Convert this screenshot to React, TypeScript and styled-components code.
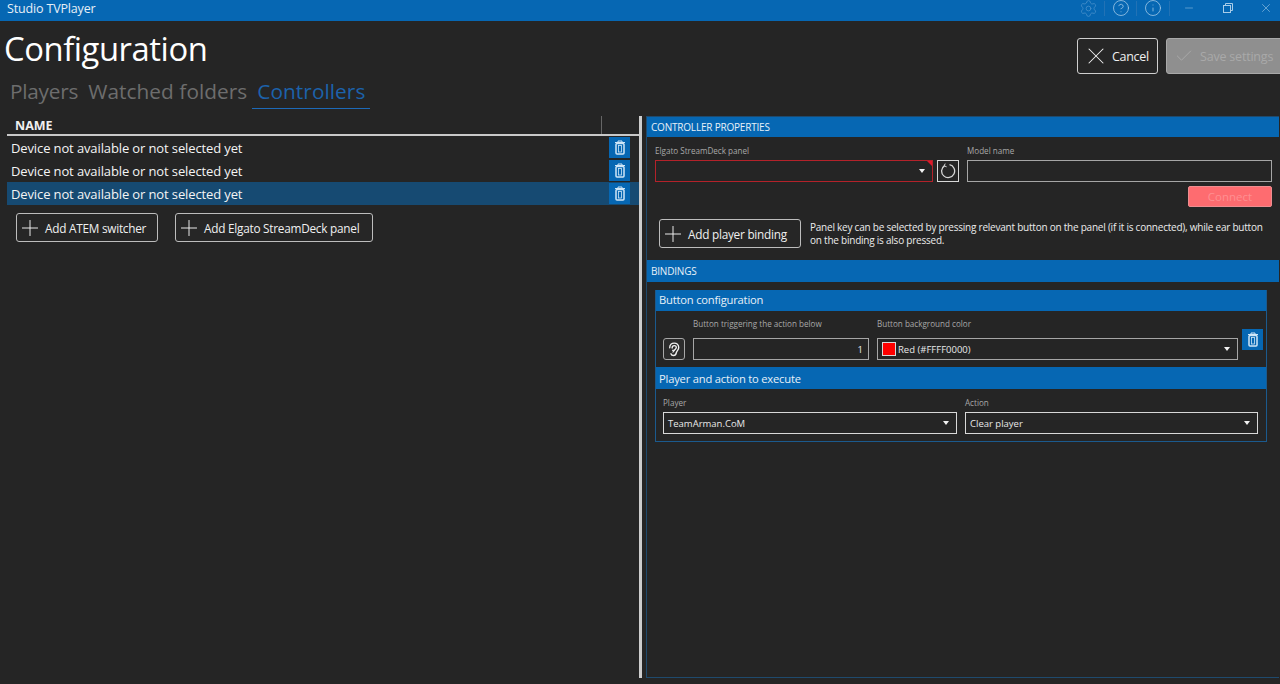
import React from "react";
import styled, { createGlobalStyle } from "styled-components";
import { CircleHelp, Info, Plus, Settings, X, Check, Minus } from "lucide-react";

const BLUE = "#0667b3";

const GlobalStyle = createGlobalStyle`
  * { box-sizing: border-box; }
  html, body { margin: 0; padding: 0; height: 100%; background: #252525; overflow: hidden; }
  body { font-family: "Open Sans", "Noto Sans", "Liberation Sans", sans-serif; color: #f4f4f4; }
`;

const Page = styled.div`
  width: 1280px;
  height: 684px;
  overflow: hidden;
  background: #252525;
`;

const TitleBar = styled.header`
  height: 21px;
  background: ${BLUE};
  display: flex;
  align-items: center;
  padding: 0 0 5px 7px;
`;

const AppName = styled.span`
  font-size: 12.5px;
  letter-spacing: -0.16px;
  color: #e6eff7;
  flex: 1;
`;

const TitleIcons = styled.div`
  display: flex;
  align-items: center;
  margin-right: -4px;
  color: #4a90cb;
`;

const TitleIcon = styled.div<{ $w: number; $line?: boolean; $bright?: boolean }>`
  width: ${(p) => p.$w}px;
  height: 15px;
  display: flex;
  align-items: center;
  justify-content: center;
  color: ${(p) => (p.$bright ? "#a9cde9" : "inherit")};
  border-right: ${(p) => (p.$line ? "1px solid #2272b5" : "none")};
`;

const TopRow = styled.div`
  height: 95px;
  width: 1320px;
  display: flex;
`;

const Heading = styled.div`
  width: 1077px;
  flex: none;
`;

const Title = styled.h1`
  margin: 9px 0 0;
  padding-left: 4px;
  font-size: 32.8px;
  font-weight: 400;
  line-height: 38px;
  letter-spacing: -0.45px;
  color: #fff;
`;

const Tabs = styled.nav`
  display: flex;
  padding-left: 5px;
  margin-top: 9px;
`;

const Tab = styled.div<{ $active?: boolean }>`
  height: 32px;
  padding: 0 5px;
  font-size: 20.8px;
  line-height: 28px;
  letter-spacing: 0.06px;
  color: ${(p) => (p.$active ? "#1c62ab" : "#6d6d6d")};
  border-bottom: 1px solid ${(p) => (p.$active ? "#1d6ab8" : "transparent")};

  &:first-child {
    letter-spacing: -0.24px;
  }
`;

const TopButtons = styled.div`
  display: flex;
  gap: 8px;
  padding-top: 17px;
`;

const CancelButton = styled.button`
  width: 81px;
  height: 36px;
  display: flex;
  align-items: center;
  gap: 2px;
  padding: 0 0 0 4px;
  background: #262626;
  border: 1px solid #cfcfcf;
  border-radius: 3px;
  color: #f0f0f0;
  font: inherit;
  font-size: 12.5px;
  letter-spacing: -0.3px;
`;

const SaveButton = styled(CancelButton)`
  width: 130px;
  background: #8f8f8f;
  border-color: #a9a9a9;
  color: #a9a9a9;
  gap: 6px;
  padding-left: 7px;
  letter-spacing: -0.2px;
`;

const Main = styled.main`
  height: 562px;
  display: flex;
  padding-left: 7px;
`;

const DevicePane = styled.section`
  width: 632px;
  flex: none;
`;

const ColumnHead = styled.div`
  height: 20px;
  border-bottom: 2px solid #c8c8c8;
`;

const NameCell = styled.div`
  width: 595px;
  height: 18px;
  padding: 2px 0 0 8px;
  border-right: 1px solid #666;
  font-size: 12.5px;
  font-weight: 700;
  line-height: 16px;
  color: #f0f0f0;
`;

const DeviceRow = styled.div<{ $selected?: boolean }>`
  height: 23px;
  display: flex;
  align-items: center;
  justify-content: space-between;
  padding: 0 9px 0 4px;
  font-size: 13px;
  letter-spacing: -0.12px;
  color: #f4f4f4;
  background: ${(p) => (p.$selected ? "#164a72" : "transparent")};
`;

const TrashButton = styled.button`
  width: 21px;
  height: 21px;
  flex: none;
  display: flex;
  align-items: center;
  justify-content: center;
  padding: 0;
  border: none;
  background: ${BLUE};
  color: #cfe6f7;
`;

const AddRow = styled.div`
  display: flex;
  gap: 17px;
  padding: 8px 0 0 9px;
`;

const AddButton = styled.button<{ $w: number }>`
  width: ${(p) => p.$w}px;
  height: 29px;
  display: flex;
  align-items: center;
  gap: 2px;
  padding: 0;
  background: #262626;
  border: 1px solid #bdbdbd;
  border-radius: 3px;
  color: #f0f0f0;
  font: inherit;
  font-size: 11.8px;
  letter-spacing: -0.25px;
  white-space: nowrap;
`;

const Splitter = styled.div`
  width: 3px;
  flex: none;
  background: #cdcdcd;
`;

const PropsPane = styled.section`
  width: 633px;
  flex: none;
  margin-left: 4px;
  border: 1px solid #1f4a6d;
  border-right: none;
`;

const SectionHeader = styled.div<{ $h: number; $tall?: boolean }>`
  height: ${(p) => p.$h}px;
  display: flex;
  align-items: center;
  padding-left: ${(p) => (p.$tall ? 3 : 4)}px;
  background: ${BLUE};
  font-size: ${(p) => (p.$tall ? "11.2px" : "10px")};
  letter-spacing: -0.2px;
  color: #e6f0f8;
`;

const ConfigHeader = styled(SectionHeader)`
  padding-bottom: 2px;
`;

const PropsBody = styled.div`
  padding: 7px 7px 12px 8px;
`;

const DeviceGrid = styled.div`
  display: grid;
  grid-template-columns: 278px 22px 305px;
  column-gap: 4px;
  align-items: end;

  & > :last-child {
    margin-left: 4px;
    width: 305px;
  }
`;

const Field = styled.div<{ $gap?: number }>`
  display: flex;
  flex-direction: column;
  gap: ${(p) => p.$gap ?? 2}px;
  min-width: 0;
`;

const FieldLabel = styled.label`
  height: 14px;
  font-size: 8.1px;
  line-height: 14px;
  color: #a8a8a8;
`;

const Combo = styled.div<{ $error?: boolean; $bright?: boolean }>`
  position: relative;
  height: 22px;
  display: flex;
  align-items: center;
  gap: 2px;
  padding: 0 18px 0 4px;
  border: 1px solid ${(p) => (p.$error ? "#b4222a" : p.$bright ? "#d8d8d8" : "#a6a6a6")};
  background: #252525;
  font-size: 9.5px;
  color: #e8e8e8;

  &::after {
    content: "";
    position: absolute;
    right: 7px;
    top: 8px;
    border-left: 3.5px solid transparent;
    border-right: 3.5px solid transparent;
    border-top: 4px solid #f2f2f2;
  }
`;

const ErrorCorner = styled.span`
  position: absolute;
  top: 0;
  right: 0;
  border-top: 5px solid #e0182a;
  border-left: 5px solid transparent;
`;

const TextBox = styled.div<{ $right?: boolean }>`
  height: 22px;
  display: flex;
  align-items: center;
  justify-content: ${(p) => (p.$right ? "flex-end" : "flex-start")};
  padding: 0 5px;
  border: 1px solid #a6a6a6;
  background: #252525;
  font-size: 9.5px;
  color: #e8e8e8;
`;

const RefreshButton = styled.button`
  width: 22px;
  height: 22px;
  display: flex;
  align-items: center;
  justify-content: center;
  padding: 0;
  background: #262626;
  border: 1px solid #d8d8d8;
  color: #d8d8d8;
`;

const ConnectRow = styled.div`
  display: flex;
  justify-content: flex-end;
  margin-top: 4px;
`;

const ConnectButton = styled.button`
  width: 84px;
  height: 21px;
  padding: 0;
  background: #fe6c70;
  border: 1px solid #ee8d90;
  border-radius: 2px;
  color: #ff8f92;
  font: inherit;
  font-size: 11.5px;
`;

const BindingRow = styled.div`
  display: flex;
  align-items: center;
  gap: 9px;
  margin-top: 12px;
  padding-left: 4px;
`;

const Hint = styled.p`
  margin: 0;
  width: 462px;
  font-size: 10px;
  line-height: 13px;
  letter-spacing: -0.23px;
  color: #ececec;
`;

const BindingGroup = styled.div`
  width: 612px;
  margin: 8px 0 0 8px;
  border: 1px solid #1b5a8e;
  border-top: none;
`;

const ConfigRow = styled.div`
  display: grid;
  grid-template-columns: 22px 176px 361px 21px;
  column-gap: 8px;
  padding: 6px 0 7px 7px;
  align-items: end;
`;

const EarButton = styled.button`
  width: 22px;
  height: 22px;
  display: flex;
  align-items: center;
  justify-content: center;
  padding: 0;
  background: #2c2c2c;
  border: 1px solid #a8a8a8;
  border-radius: 3px;
  color: #f0f0f0;
`;

const Swatch = styled.span`
  width: 14px;
  height: 14px;
  flex: none;
  background: #ff0000;
  border: 1px solid #d9d9d9;
`;

const RowTrash = styled(TrashButton)`
  align-self: start;
  margin: 12px 0 0 -4px;
`;

const PlayerRow = styled.div`
  display: grid;
  grid-template-columns: 294px 293px;
  column-gap: 8px;
  padding: 7px 0 7px 7px;
`;

const TrashIcon = () => (
  <svg width="12" height="15" viewBox="0 0 12 15" fill="none" stroke="currentColor">
    <path d="M1 2.5h10M4 2.5V1h4v1.5" strokeWidth="1" />
    <rect x="2" y="3.5" width="8" height="10.5" rx="1" strokeWidth="1.5" />
    <rect x="4.5" y="5.5" width="3" height="6.5" strokeWidth="0.8" />
  </svg>
);

const RestoreIcon = () => (
  <svg width="10" height="10" viewBox="0 0 10 10" fill="none" stroke="currentColor" strokeWidth="1">
    <rect x="0.5" y="2.5" width="7" height="7" />
    <path d="M2.5 2.5V0.5h7v7H7.5" />
  </svg>
);

const RefreshIcon = () => (
  <svg width="16" height="16" viewBox="0 0 16 16" fill="none" stroke="currentColor" strokeWidth="1.3">
    <path d="M4.6 2.6A6.5 6.5 0 1 0 9.5 1.7" />
    <path d="M5.2 0.6 4.2 2.8 6.6 3.8" strokeWidth="1" />
  </svg>
);

const EarIcon = () => (
  <svg width="12" height="15" viewBox="0 0 14 17" fill="none" stroke="currentColor" strokeWidth="1.6" strokeLinecap="round">
    <path d="M2 6.5C2 3 4.3 1 7.2 1c3 0 5.3 2.2 5.3 5.3 0 2.8-2.3 3.7-2.8 6-.4 2-1.6 3.2-3.3 3.2-1.5 0-2.6-.8-3-2" />
    <path d="M4.8 6.8c0-1.6 1-2.8 2.5-2.8 1.4 0 2.4 1 2.4 2.3 0 1.6-1.9 2-2.4 3.4" />
    <path d="M5.2 9.5c.7-.6 1.5-.2 1.5.7 0 .7-.6 1.2-1.2 1.2" strokeWidth="1.2" />
  </svg>
);

const devices = [false, false, true];

export default function App() {
  return (
    <Page>
      <GlobalStyle />
      <TitleBar>
        <AppName>Studio TVPlayer</AppName>
        <TitleIcons>
          <TitleIcon $w={33} $line>
            <Settings size={19} strokeWidth={1} />
          </TitleIcon>
          <TitleIcon $w={32} $line $bright>
            <CircleHelp size={18} strokeWidth={1} />
          </TitleIcon>
          <TitleIcon $w={33} $line $bright>
            <Info size={18} strokeWidth={1} />
          </TitleIcon>
          <TitleIcon $w={38} $bright>
            <Minus size={12} strokeWidth={1} />
          </TitleIcon>
          <TitleIcon $w={40} $bright>
            <RestoreIcon />
          </TitleIcon>
          <TitleIcon $w={36} $bright>
            <X size={14} strokeWidth={1} />
          </TitleIcon>
        </TitleIcons>
      </TitleBar>

      <TopRow>
        <Heading>
          <Title>Configuration</Title>
          <Tabs>
            <Tab>Players</Tab>
            <Tab>Watched folders</Tab>
            <Tab $active>Controllers</Tab>
          </Tabs>
        </Heading>
        <TopButtons>
          <CancelButton>
            <X size={28} strokeWidth={0.9} />
            Cancel
          </CancelButton>
          <SaveButton>
            <Check size={20} strokeWidth={1.2} />
            Save settings
          </SaveButton>
        </TopButtons>
      </TopRow>

      <Main>
        <DevicePane>
          <ColumnHead>
            <NameCell>NAME</NameCell>
          </ColumnHead>
          {devices.map((selected, i) => (
            <DeviceRow key={i} $selected={selected}>
              Device not available or not selected yet
              <TrashButton>
                <TrashIcon />
              </TrashButton>
            </DeviceRow>
          ))}
          <AddRow>
            <AddButton $w={142}>
              <Plus size={26} strokeWidth={0.9} />
              Add ATEM switcher
            </AddButton>
            <AddButton $w={198}>
              <Plus size={26} strokeWidth={0.9} />
              Add Elgato StreamDeck panel
            </AddButton>
          </AddRow>
        </DevicePane>

        <Splitter />

        <PropsPane>
          <SectionHeader $h={20}>CONTROLLER PROPERTIES</SectionHeader>
          <PropsBody>
            <DeviceGrid>
              <Field>
                <FieldLabel>Elgato StreamDeck panel</FieldLabel>
                <Combo $error>
                  <ErrorCorner />
                </Combo>
              </Field>
              <RefreshButton>
                <RefreshIcon />
              </RefreshButton>
              <Field>
                <FieldLabel>Model name</FieldLabel>
                <TextBox />
              </Field>
            </DeviceGrid>
            <ConnectRow>
              <ConnectButton>Connect</ConnectButton>
            </ConnectRow>
            <BindingRow>
              <AddButton $w={142}>
                <Plus size={26} strokeWidth={0.9} />
                Add player binding
              </AddButton>
              <Hint>
                Panel key can be selected by pressing relevant button on the panel (if it is
                connected), while ear button on the binding is also pressed.
              </Hint>
            </BindingRow>
          </PropsBody>

          <SectionHeader $h={22}>BINDINGS</SectionHeader>
          <BindingGroup>
            <ConfigHeader $h={21} $tall>Button configuration</ConfigHeader>
            <ConfigRow>
              <EarButton>
                <EarIcon />
              </EarButton>
              <Field $gap={7}>
                <FieldLabel>Button triggering the action below</FieldLabel>
                <TextBox $right>1</TextBox>
              </Field>
              <Field $gap={7}>
                <FieldLabel>Button background color</FieldLabel>
                <Combo>
                  <Swatch />
                  Red (#FFFF0000)
                </Combo>
              </Field>
              <RowTrash>
                <TrashIcon />
              </RowTrash>
            </ConfigRow>
            <SectionHeader $h={22} $tall>Player and action to execute</SectionHeader>
            <PlayerRow>
              <Field>
                <FieldLabel>Player</FieldLabel>
                <Combo $bright>TeamArman.CoM</Combo>
              </Field>
              <Field>
                <FieldLabel>Action</FieldLabel>
                <Combo $bright>Clear player</Combo>
              </Field>
            </PlayerRow>
          </BindingGroup>
        </PropsPane>
      </Main>
    </Page>
  );
}
